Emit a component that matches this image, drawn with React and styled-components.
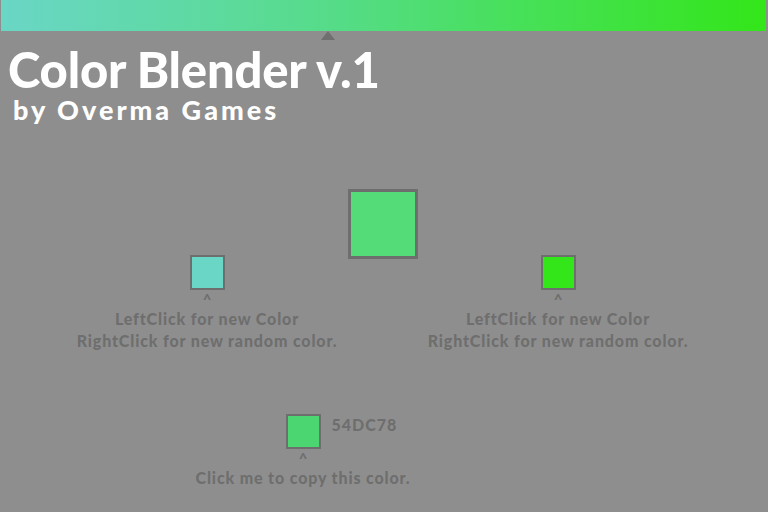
import styled, { createGlobalStyle } from "styled-components";

const GlobalStyle = createGlobalStyle`
    html, body {
        margin: 0;
        padding: 0;
        background-color: #8e8e8e;
        overflow: hidden;
    }
    body {
        width: 768px;
        height: 512px;
        font-family: Lato, "Open Sans", sans-serif;
    }
`

const Screen = styled.div`
    width: 768px;
    height: 512px;
    display: flex;
    flex-direction: column;
`

const BarWrap = styled.div`
    position: relative;
    height: 31px;
    padding: 0 2px 0 1px;
`

const GradientBar = styled.div`
    height: 100%;
    background: linear-gradient(90deg, #6ad6c6 0%, #55dc86 45%, #33e619 100%);
`

const Marker = styled.div`
    position: absolute;
    top: 31px;
    left: ${p => p.left}px;
    width: 0;
    height: 0;
    border-left: 7px solid transparent;
    border-right: 7px solid transparent;
    border-bottom: 9px solid #6f6f6f;
`

const Title = styled.h1`
    margin: 14px 0 0 8px;
    font-size: 49px;
    line-height: 1;
    font-weight: 900;
    letter-spacing: -0.2px;
    color: #ffffff;
`

const Subtitle = styled.h2`
    margin: 2px 0 0 13px;
    font-size: 27px;
    line-height: 1;
    font-weight: 900;
    letter-spacing: 3px;
    color: #ffffff;
`

const Blender = styled.div`
    margin-top: 66px;
    padding-right: 3px;
    display: grid;
    grid-template-columns: 281px 70px 281px;
    justify-content: center;
    align-items: start;
`

const Picker = styled.div`
    margin-top: ${p => p.offset || 0}px;
    display: flex;
    flex-direction: column;
    align-items: center;
`

const Swatch = styled.div`
    box-sizing: border-box;
    width: ${p => p.size}px;
    height: ${p => p.size}px;
    background-color: ${p => p.color};
    border: ${p => p.border}px solid #6e6e6e;
`

const Caret = styled.div`
    height: 18px;
    font-size: 15px;
    line-height: 18px;
    font-weight: 900;
    color: #6e6e6e;
`

const Hint = styled.p`
    margin: 0;
    font-size: 16px;
    line-height: 22px;
    font-weight: 900;
    letter-spacing: 0.85px;
    color: #6e6e6e;
    text-align: center;
    white-space: nowrap;
`

const CopyBlock = styled.div`
    margin: 62px 0 0 153px;
    width: 300px;
    display: flex;
    flex-direction: column;
    align-items: center;
`

const SwatchRow = styled.div`
    width: 100%;
    display: grid;
    grid-template-columns: 1fr 35px 1fr;
    align-items: start;
`

const HexLabel = styled.span`
    grid-column: 3;
    padding-left: 11px;
    font-size: 16px;
    line-height: 22px;
    font-weight: 900;
    letter-spacing: 1px;
    color: #6e6e6e;
`

const SidePicker = ({ color }) => (
    <Picker offset={66}>
        <Swatch size={35} border={2} color={color} />
        <Caret>^</Caret>
        <Hint>LeftClick for new Color</Hint>
        <Hint>RightClick for new random color.</Hint>
    </Picker>
)

const App = () => {
    const left = "#6ad6c6"
    const right = "#33e619"
    const mix = "#54dc78"

    return (
        <>
            <GlobalStyle />
            <Screen>
                <BarWrap>
                    <GradientBar />
                    <Marker left={321} />
                </BarWrap>
                <Title>Color Blender v.1</Title>
                <Subtitle>by Overma Games</Subtitle>
                <Blender>
                    <SidePicker color={left} />
                    <Picker>
                        <Swatch size={70} border={3} color={mix} />
                    </Picker>
                    <SidePicker color={right} />
                </Blender>
                <CopyBlock>
                    <SwatchRow>
                        <span />
                        <Swatch size={35} border={2} color="#4cd672" />
                        <HexLabel>54DC78</HexLabel>
                    </SwatchRow>
                    <Caret>^</Caret>
                    <Hint>Click me to copy this color.</Hint>
                </CopyBlock>
            </Screen>
        </>
    )
}

export default App;
